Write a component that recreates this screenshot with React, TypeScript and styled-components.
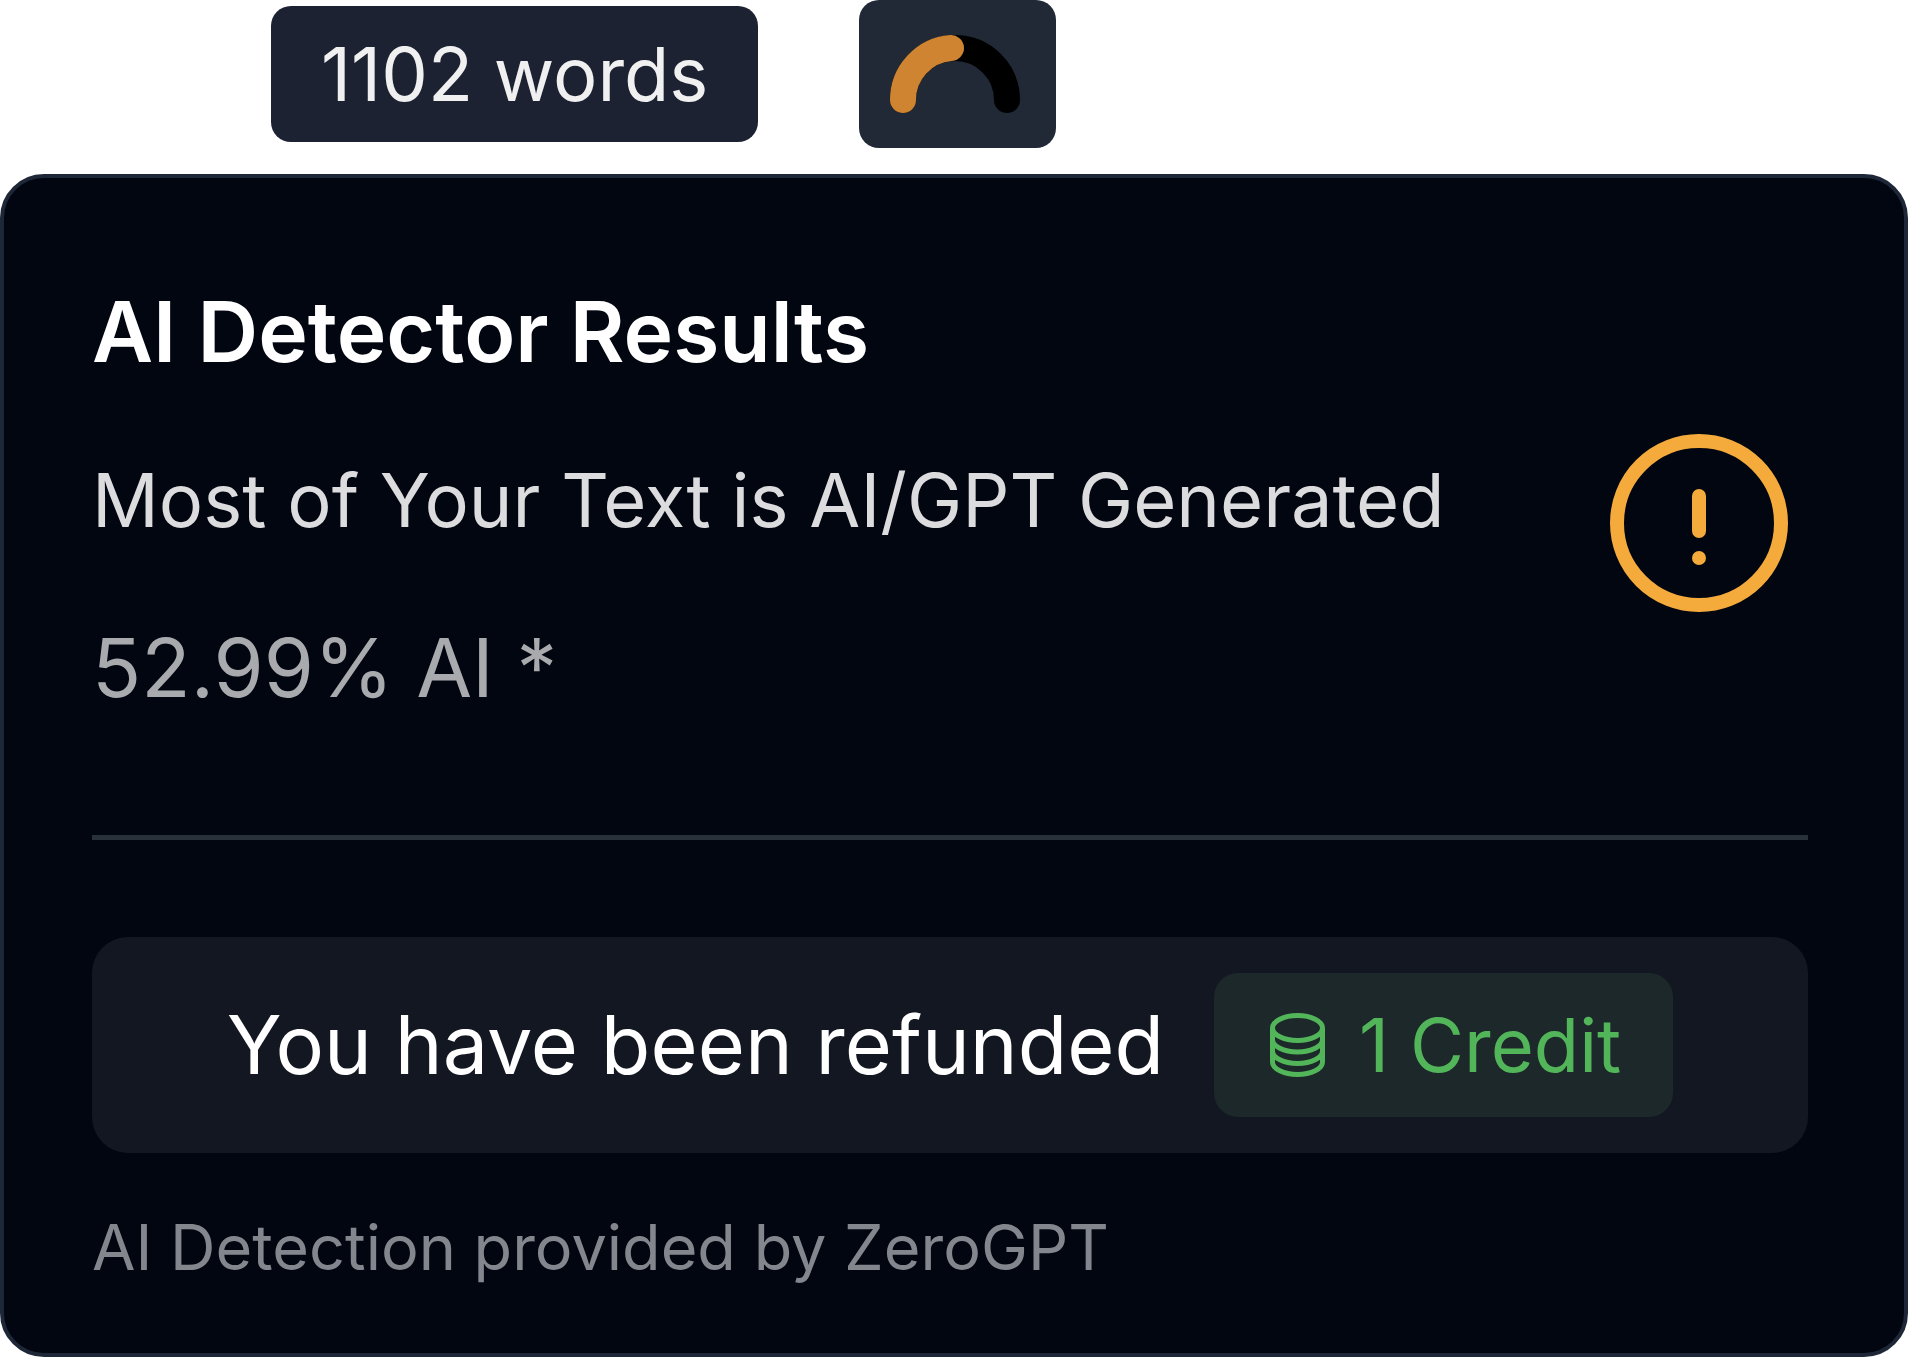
import React from 'react';
import styled, { createGlobalStyle } from 'styled-components';

const GlobalStyle = createGlobalStyle`
  * { box-sizing: border-box; }
  body { margin: 0; background: #fff; font-family: Inter, "Liberation Sans", sans-serif; }
  h1, p { margin: 0; }
  svg { display: block; flex: none; }
`;

const Page = styled.div`
  display: flex;
  flex-direction: column;
`;

const Stats = styled.div`
  display: flex;
  align-items: center;
  gap: 101px;
  padding-left: 271px;
`;

const WordCount = styled.div`
  padding: 0 50px;
  line-height: 136px;
  border-radius: 20px;
  background: #1c2231;
  color: #f0f0f1;
  font-size: 74px;
  white-space: nowrap;
`;

const GaugeTile = styled.div`
  border-radius: 20px;
  background: #202935;
`;

const Card = styled.main`
  margin-top: 26px;
  padding: 104px 96px 70px 88px;
  border: 4px solid #1e2737;
  border-radius: 44px;
  background: #020611;
`;

const Summary = styled.section`
  display: flex;
  align-items: center;
  justify-content: space-between;
  padding: 0 20px 117px 0;
  border-bottom: 5px solid #283039;
`;

const Lines = styled.div`
  display: flex;
  flex-direction: column;
  gap: 68px;
`;

const Title = styled.h1`
  color: #fff;
  font-size: 84px;
  line-height: 100px;
  font-weight: 600;
`;

const Detail = styled.p<{ $size: number; $color: string }>`
  color: ${(p) => p.$color};
  font-size: ${(p) => p.$size}px;
  line-height: 100px;
`;

const Status = styled.div`
  padding-top: 46px;
`;

const Refund = styled.section`
  display: flex;
  align-items: center;
  justify-content: center;
  gap: 50px;
  height: 216px;
  margin-top: 97px;
  border-radius: 36px;
  background: #131722;
  color: #fff;
  font-size: 81px;
`;

const Credit = styled.span`
  display: flex;
  align-items: center;
  gap: 34px;
  height: 144px;
  padding: 0 52px 0 56px;
  border-radius: 24px;
  background: #1c2829;
  color: #53b559;
  font-size: 74px;
`;

const Provider = styled.p`
  margin-top: 58px;
  color: #83868d;
  font-size: 63px;
  line-height: 72px;
`;

function Gauge() {
  return (
    <svg width="197" height="148" viewBox="0 0 197 148" fill="none" strokeWidth="26" strokeLinecap="round">
      <path d="M44 100A52 52 0 0 1 148 100" stroke="#000" />
      <path d="M44 100A52 52 0 0 1 92 48" stroke="#cf8431" />
    </svg>
  );
}

function WarningIcon() {
  return (
    <svg width="178" height="178" viewBox="0 0 178 178" fill="none" stroke="#f5aa3c" strokeWidth="14" strokeLinecap="round">
      <circle cx="89" cy="89" r="82" />
      <path d="M89 62v35M89 124v.1" />
    </svg>
  );
}

function CoinsIcon() {
  return (
    <svg width="55" height="64" viewBox="0 0 55 64" fill="none" stroke="currentColor" strokeWidth="5">
      <ellipse cx="27.5" cy="15" rx="25" ry="12.5" />
      <path d="M2.5 15v34a25 12.5 0 0 0 50 0V15" />
      <path d="M2.5 26.5a25 12.5 0 0 0 50 0M2.5 38a25 12.5 0 0 0 50 0" />
    </svg>
  );
}

export default function App() {
  return (
    <Page>
      <GlobalStyle />
      <Stats>
        <WordCount>1102 words</WordCount>
        <GaugeTile>
          <Gauge />
        </GaugeTile>
      </Stats>
      <Card>
        <Summary>
          <Lines>
            <Title>AI Detector Results</Title>
            <Detail $size={74} $color="#dcdcde">Most of Your Text is AI/GPT Generated</Detail>
            <Detail $size={81} $color="#a9aaad">52.99% AI *</Detail>
          </Lines>
          <Status>
            <WarningIcon />
          </Status>
        </Summary>
        <Refund>
          <span>You have been refunded</span>
          <Credit>
            <CoinsIcon />
            1 Credit
          </Credit>
        </Refund>
        <Provider>AI Detection provided by ZeroGPT</Provider>
      </Card>
    </Page>
  );
}
